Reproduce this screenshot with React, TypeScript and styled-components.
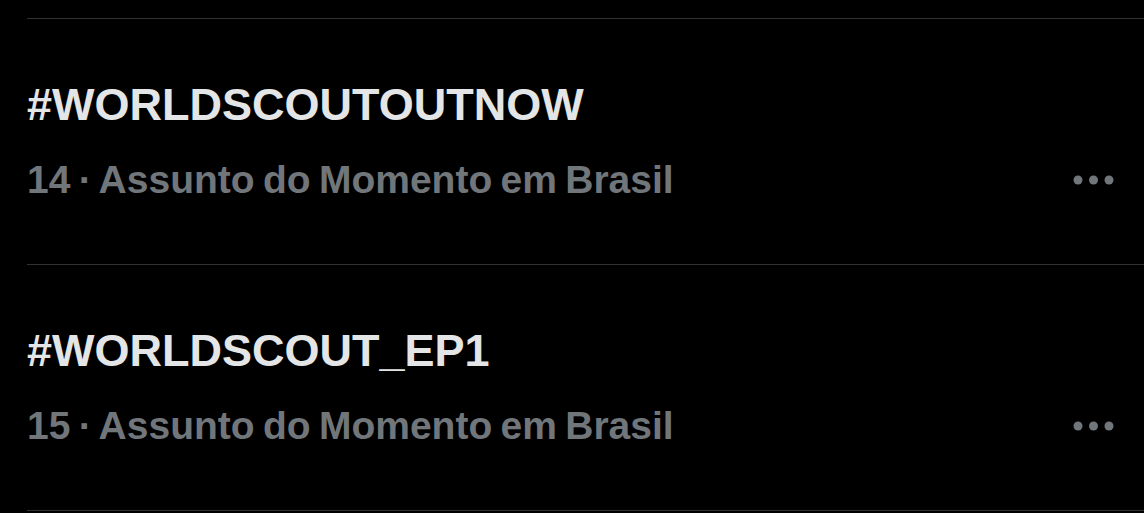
import React from "react";
import styled, { createGlobalStyle } from "styled-components";

const Global = createGlobalStyle`
  html, body { margin: 0; padding: 0; background: #000; }
  body { font-family: "Liberation Sans", Arial, sans-serif; }
`;

const Page = styled.div`
  background: #000;
  min-height: 513px;
  padding-top: 18px;
  box-sizing: border-box;
  overflow: hidden;
`;

const List = styled.div`
  margin-left: 27px;
  display: flex;
  flex-direction: column;
`;

const Row = styled.div`
  border-top: 1px solid #2f3336;
  padding: 59px 29px 61px 0;
  display: flex;
  flex-direction: column;
  gap: 25px;
`;

const Divider = styled.div`
  border-top: 1px solid #2f3336;
`;

const Title = styled.div`
  font-size: 45px;
  line-height: 54px;
  font-weight: 700;
  color: #e3e5e6;
  white-space: nowrap;
`;

const MetaLine = styled.div`
  display: flex;
  align-items: center;
  justify-content: space-between;
  height: 46px;
`;

const Meta = styled.div`
  font-size: 39px;
  line-height: 46px;
  font-weight: 700;
  color: #71767b;
  word-spacing: -2.5px;
  white-space: nowrap;
`;

const More = styled.svg`
  width: 42px;
  height: 10px;
  display: block;
`;

const Dots = () => (
  <More viewBox="0 0 42 10">
    <circle cx="5" cy="5" r="4.5" fill="#71767b" />
    <circle cx="20.5" cy="5" r="4.5" fill="#71767b" />
    <circle cx="36" cy="5" r="4.5" fill="#71767b" />
  </More>
);

const trends = [
  { tag: "#WORLDSCOUTOUTNOW", rank: 14 },
  { tag: "#WORLDSCOUT_EP1", rank: 15 },
];

export default function App() {
  return (
    <>
      <Global />
      <Page>
        <List>
          {trends.map((t) => (
            <Row key={t.tag}>
              <Title>{t.tag}</Title>
              <MetaLine>
                <Meta>{t.rank} · Assunto do Momento em Brasil</Meta>
                <Dots />
              </MetaLine>
            </Row>
          ))}
          <Divider />
        </List>
      </Page>
    </>
  );
}
